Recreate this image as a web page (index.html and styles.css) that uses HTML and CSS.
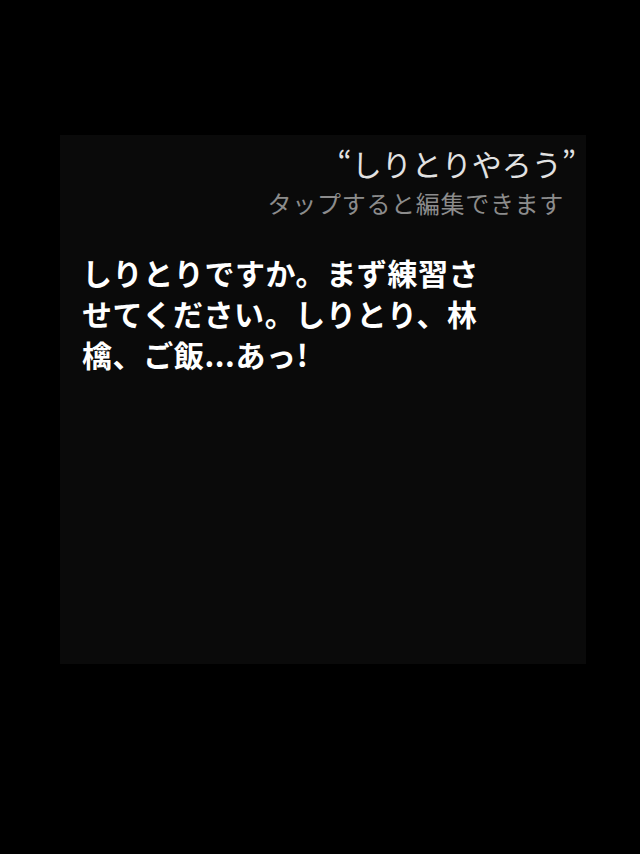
FILE: index.html
```html
<!DOCTYPE html>
<html lang="ja">
<head>
  <meta charset="UTF-8">
  <meta name="viewport" content="width=device-width, initial-scale=1.0">
  <title>しりとりやろう</title>
<link rel="stylesheet" href="styles.css">
</head>
<body>
  <div class="panel">
    <div class="query">
      <p class="query-text">“しりとりやろう”</p>
      <p class="query-hint">タップすると編集できます</p>
    </div>
    <p class="answer">しりとりですか。まず練習させてください。しりとり、林檎、ご飯...あっ!</p>
  </div>
</body>
</html>
```

FILE: styles.css
```css
html, body {
  margin: 0;
  padding: 0;
  background: #000;
}
body {
  width: 640px;
  height: 854px;
  font-family: "Noto Sans CJK JP", "Noto Sans", sans-serif;
}
p {
  margin: 0;
}
.panel {
  margin: 135px 0 0 60px;
  width: 526px;
  height: 529px;
  background: #0a0a0a;
  box-sizing: border-box;
  padding: 8px 10px 0 22px;
}
.query {
  display: flex;
  flex-direction: column;
  align-items: flex-end;
}
.query-text {
  color: #e2e2e2;
  font-size: 30px;
  line-height: 40px;
  font-weight: 400;
}
.query-hint {
  color: #8c8c8c;
  font-size: 24px;
  line-height: 34px;
  letter-spacing: 0.7px;
  margin: 3px 12px 0 0;
}
.answer {
  margin-top: 32px;
  width: 420px;
  color: #fff;
  font-size: 30px;
  line-height: 41px;
  font-weight: 700;
  letter-spacing: 0.6px;
}
```
